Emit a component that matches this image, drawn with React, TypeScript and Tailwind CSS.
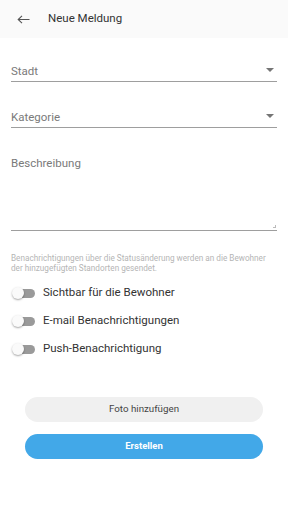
import React, { useState } from 'react';

// ─────────────────────────────────────────────────────────────────────────────
const Toggle = ({ on, onClick }: { on: boolean; onClick: () => void }) => (
  <button onClick={onClick} className="relative w-[24px] h-[14px] shrink-0">
    <span className={`absolute left-[3px] top-[3px] w-[20px] h-[9px] rounded-full ${on ? 'bg-[#9ccff2]' : 'bg-[#9a9a9a]'}`} />
    <span
      className={`absolute top-[1px] w-[12px] h-[12px] rounded-full shadow-[0_1px_2px_rgba(0,0,0,0.35)] ${on ? 'left-[12px] bg-[#42a5e8]' : 'left-0 bg-[#fafafa]'}`}
    />
  </button>
);

const SelectField = ({ label }: { label: string }) => (
  <div className="flex items-end justify-between border-b border-[#9e9e9e] pb-[4px] h-[22px]">
    <span className="text-[11.5px] text-[#7a7a7a] leading-none">{label}</span>
    <svg width="8" height="4" viewBox="0 0 8 4" className="mr-[3px] mb-[5px]">
      <path d="M0 0h8L4 4z" fill="#757575" />
    </svg>
  </div>
);

const App = () => {
  const [toggles, setToggles] = useState([false, false, false]);
  const labels = ['Sichtbar für die Bewohner', 'E-mail Benachrichtigungen', 'Push-Benachrichtigung'];

  return (
    <div className="min-h-screen bg-white" style={{ fontFamily: 'Roboto, "Liberation Sans", sans-serif' }}>
      {/* header bar */}
      <header className="h-[38px] bg-[#fafafa] flex items-center">
        <svg width="13" height="9" viewBox="0 0 13 9" className="ml-[17px]">
          <path d="M12.5 4.5H1.2M5 0.8L1.2 4.5 5 8.2" fill="none" stroke="#555" strokeWidth="1.1" />
        </svg>
        <span className="ml-[18px] text-[11.5px] text-[#333]">Neue Meldung</span>
      </header>

      <div className="px-[11px]">
        <div className="pt-[22px]">
          <SelectField label="Stadt" />
        </div>
        <div className="pt-[24px]">
          <SelectField label="Kategorie" />
        </div>

        {/* description */}
        <div className="mt-[30px] h-[73px] border-b border-[#9e9e9e] relative">
          <div className="text-[11.5px] text-[#7a7a7a] leading-none">Beschreibung</div>
          <span className="absolute right-[1px] bottom-[2px] w-[3px] h-[3px] border-r border-b border-[#bbb]" />
        </div>

        <p className="mt-[22px] text-[8.2px] leading-[10px] text-[#b5b5b5]">
          Benachrichtigungen über die Statusänderung werden an die Bewohner der hinzugefügten Standorten gesendet.
        </p>

        {/* switches */}
        <div className="mt-[13px] flex flex-col gap-[14px] pl-[1px]">
          {labels.map((l, i) => (
            <div key={l} className="flex items-center gap-[7px] h-[14px]">
              <Toggle on={toggles[i]} onClick={() => setToggles(toggles.map((t, j) => (j === i ? !t : t)))} />
              <span className="text-[11.5px] text-[#333] leading-none">{l}</span>
            </div>
          ))}
        </div>
      </div>

      {/* actions */}
      <div className="mt-[41px] px-[25px] flex flex-col gap-[12px]">
        <button className="h-[25px] rounded-full bg-[#f0f0f0] text-[9.75px] text-[#444]">Foto hinzufügen</button>
        <button className="h-[25px] rounded-full bg-[#42a8e8] text-[9.5px] font-bold text-white">Erstellen</button>
      </div>
    </div>
  );
};

export default App;
